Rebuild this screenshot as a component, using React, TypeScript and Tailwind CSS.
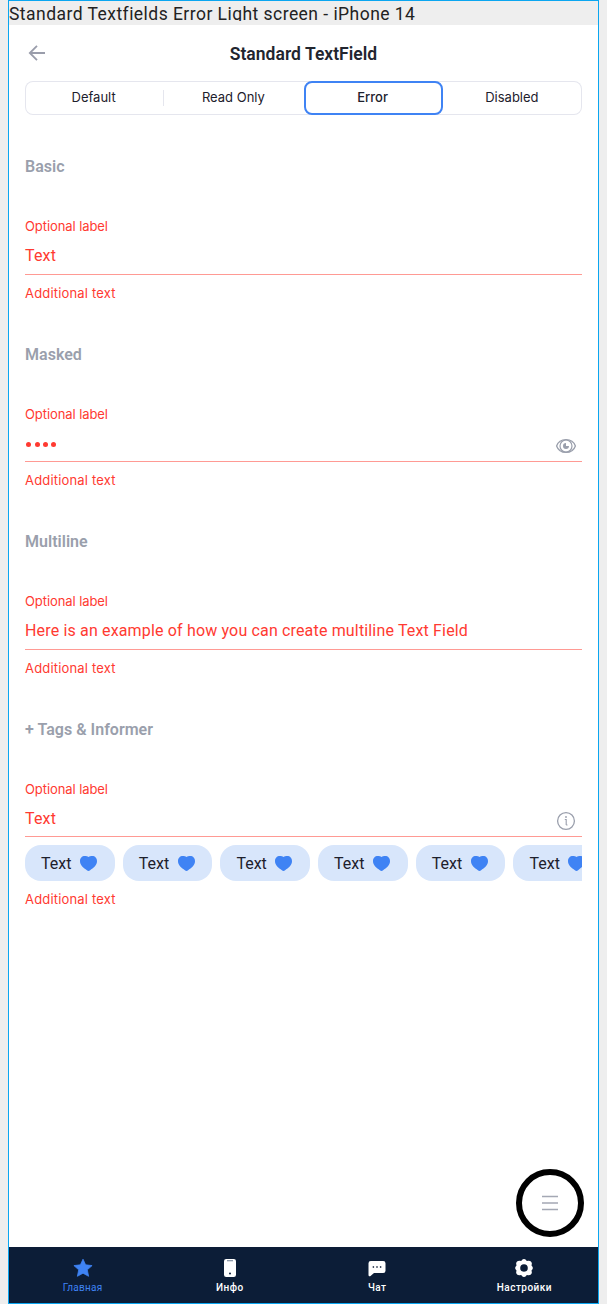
import React from "react";

const TABS = ["Default", "Read Only", "Error", "Disabled"];

function ArrowLeft() {
  return (
    <svg className="h-6 w-6" viewBox="0 0 24 24" fill="none" stroke="#9a9dab" strokeWidth="1.8">
      <path d="M20 12H5M12 4.8 4.8 12l7.2 7.2" />
    </svg>
  );
}

function EyeIcon() {
  return (
    <svg className="h-6 w-6" viewBox="0 0 24 24" fill="none" stroke="#9a9fac">
      <path d="M2.600 12C4 8 7.800 5.600 12 5.600S20 8 21.400 12C20 16 16.200 18.400 12 18.400S4 16 2.600 12Z" strokeWidth="1.300" />
      <circle cx="12" cy="12" r="6" strokeWidth="1.200" />
      <path d="M12 9a3 3 0 1 0 3 3h-3Z" fill="#9a9fac" stroke="none" />
    </svg>
  );
}

function InfoIcon() {
  return (
    <svg className="h-6 w-6" viewBox="0 0 24 24" fill="none" stroke="#9a9fac" strokeWidth="1.3">
      <circle cx="12" cy="12" r="8.400" />
      <path d="M10.800 10.500H12.200V16M12.200 16h1.300" strokeWidth="1.100" />
      <circle cx="12" cy="8" r=".9" fill="#9a9fac" stroke="none" />
    </svg>
  );
}

function Heart() {
  return (
    <svg className="h-[15px] w-[17px] shrink-0" viewBox="0 0 18 15" preserveAspectRatio="none" fill="#3f83f4">
      <path d="M9 .9C10.100.2 11.300 0 12.800 0c3.200 0 5.200 2 5.200 5.200 0 4-3.900 6.700-7.300 9-1.100.9-2.300.9-3.400 0C3.900 11.900 0 9.200 0 5.200 0 2 2 0 5.200 0 6.800 0 7.900.2 9 .9Z" />
    </svg>
  );
}

function Field({
  title,
  className,
  labelClass,
  valueClass,
  children,
  icon,
  tags,
}: {
  title: string;
  className: string;
  labelClass: string;
  valueClass?: string;
  children: React.ReactNode;
  icon?: React.ReactNode;
  tags?: boolean;
}) {
  return (
    <section className={className}>
      <h2 className="h-[54px] text-[16px] leading-[54px] font-semibold tracking-[0.02px] text-[#9a9fac]">{title}</h2>
      <div className={"h-5 font-['Inter',sans-serif] text-[13px] leading-5 tracking-[-0.08px] " + labelClass}>
        Optional label
      </div>
      <div className="flex h-[32px] justify-between border-b border-[#ff9a94] text-[16px] leading-[26px] tracking-[0.16px]">
        <div className={valueClass}>{children}</div>
        {icon && <div className="mt-1 mr-1">{icon}</div>}
      </div>
      {tags && (
        <div className="mt-2 flex h-9 gap-2 overflow-hidden">
          {[0, 1, 2, 3, 4, 5].map((i) => (
            <div key={i} className="flex w-[89.7px] shrink-0 items-center gap-[9px] rounded-[16px] bg-[#d8e6fb] pl-4 text-[16px] text-[#1d202c]">
              <span className="w-[30px] pt-px">Text</span>
              <Heart />
            </div>
          ))}
        </div>
      )}
      <div className="mt-2 h-5 font-['Inter',sans-serif] text-[13px] leading-5 tracking-[0.17px]">Additional text</div>
    </section>
  );
}

function Star() {
  return (
    <svg className="h-5 w-5" viewBox="0 0 20 20" fill="#3f83f4" stroke="#3f83f4" strokeWidth=".8" strokeLinejoin="round">
      <path d="m10 1.200 2.600 5.600 6.500.8-4.800 4.200 1.300 6.500L10 15.200l-5.600 3.100 1.300-6.500L.9 7.600l6.500-.8Z" />
    </svg>
  );
}

function Phone() {
  return (
    <svg className="h-5 w-5" viewBox="0 0 20 20">
      <rect x="4" y="1" width="12" height="18" rx="2.200" fill="#fff" />
      <path d="M7 2.700h6" stroke="#8490a2" strokeWidth="1.200" />
      <circle cx="10" cy="15.500" r="1" fill="#0c1d37" />
    </svg>
  );
}

function Chat() {
  return (
    <svg className="h-5 w-5" viewBox="0 0 20 20">
      <path d="M3.800 3h12.400a2.300 2.300 0 0 1 2.300 2.300v7.400a2.300 2.300 0 0 1-2.300 2.300H7l-3.500 3c-.8.6-2 .2-2-1V5.300A2.300 2.300 0 0 1 3.800 3Z" fill="#fff" />
      <path d="M5.700 9h1.400M9.300 9h1.400M12.900 9h1.400" stroke="#0c1d37" strokeWidth="1.300" />
    </svg>
  );
}

function Gear() {
  return (
    <svg className="h-5 w-5" viewBox="0 0 20 20" fill="#fff">
      <path
        fillRule="evenodd"
        d="M8.200 1.800c.8-1 2.800-1 3.600 0l1 1.100 1.600-.2c2-.2 3.800 1.400 3.400 3.300l-.3 1.500.8 1c.7.900.7 2.100 0 3l-.8 1 .3 1.500c.4 1.900-1.400 3.500-3.400 3.300l-1.600-.2-1 1.100c-.8 1-2.800 1-3.600 0l-1-1.100-1.600.2c-2 .2-3.800-1.400-3.400-3.300l.3-1.500-.8-1c-.7-.9-.7-2.100 0-3l.8-1L2.200 6c-.4-1.900 1.400-3.500 3.400-3.300l1.600.2ZM10 6.200a3.800 3.800 0 1 0 0 7.600 3.800 3.800 0 0 0 0-7.600Z"
      />
    </svg>
  );
}

const NAV = [
  { label: "Главная", icon: <Star />, cls: "text-[#3f83f4] font-normal tracking-[0.28px]" },
  { label: "Инфо", icon: <Phone />, cls: "text-white font-medium tracking-[0.5px]" },
  { label: "Чат", icon: <Chat />, cls: "text-white font-medium tracking-[0.3px]" },
  { label: "Настройки", icon: <Gear />, cls: "text-white font-medium tracking-[0.48px]" },
];

export default function App() {
  return (
    <div className="h-[1304px] w-[607px] bg-[#eeeeee] pl-2 font-['Roboto',sans-serif]">
      <div className="relative flex h-[1304px] w-[591px] flex-col border border-[#0ba6f0] bg-white">
        <div className="h-6 shrink-0 bg-[#eeeeee]">
          <div className="h-[20px] overflow-hidden text-[17.5px] leading-[26px] tracking-[0.46px] whitespace-nowrap text-[#222222]">
            Standard Textfields Error Light screen - iPhone 14
          </div>
        </div>
        <header className="grid h-14 shrink-0 grid-cols-[40px_1fr_40px] items-center px-4">
          <ArrowLeft />
          <h1 className="pt-0.5 text-center text-[17.5px] font-semibold tracking-[0.03px] text-[#22252f]">Standard TextField</h1>
        </header>
        <div className="mx-4 flex h-[34px] shrink-0 rounded-[8px] shadow-[inset_0_0_0_1px_#e5e6ee]">
          {TABS.map((t, i) => (
            <div
              key={t}
              className={
                "flex w-1/4 items-center justify-center font-['Inter',sans-serif] text-[13px] leading-5 text-[#1d202c] " +
                (i === 2 ? "rounded-[8px] border-2 border-[#3f83f4] bg-white font-medium" : "")
              }
            >
              <span className="flex-1 pr-px pb-0.5 text-center">{t}</span>
              {i === 0 && <i className="h-4 w-px bg-[#e5e6ee]" />}
            </div>
          ))}
        </div>
        <main className="mx-4 flex flex-1 flex-col pt-[25px] text-[#ff3a31]">
          <Field title="Basic" className="h-[188px]" labelClass="mt-[22px] mb-[7px]">Text</Field>
          <Field title="Masked" className="h-[187px]" labelClass="mt-[22px] mb-[6px]" icon={<EyeIcon />}>
            <div className="flex h-[29px] items-center gap-[3.100px] pl-[1.300px]">
              {[0, 1, 2, 3].map((i) => (
                <i key={i} className="h-[5.500px] w-[5.200px] rounded-full bg-[#ff3a31]" />
              ))}
            </div>
          </Field>
          <Field title="Multiline" className="h-[188px]" labelClass="mt-[22px] mb-[7px]">
            Here is an example of how you can create multiline Text Field
          </Field>
          <Field
            title="+ Tags &amp; Informer"
            className="h-[220px]"
            labelClass="mt-[22px] mb-[6px]"
            valueClass="pt-px"
            icon={<InfoIcon />}
            tags
          >
            Text
          </Field>
        </main>
        <button className="absolute right-[14px] bottom-[66px] flex h-[68px] w-[68px] items-center justify-center rounded-full border-[6px] border-black bg-white" aria-label="Menu">
          <svg className="h-4 w-4" viewBox="0 0 16 16" stroke="#a4a8b4" strokeWidth="1.500">
            <path d="M0 1.500h16M0 8h16M0 14.500h16" />
          </svg>
        </button>
        <nav className="grid h-14 shrink-0 grid-cols-4 bg-[#0c1d37]">
          {NAV.map((n) => (
            <div key={n.label} className={"flex flex-col items-center pt-[11px] text-[10px] leading-5 " + n.cls}>
              {n.icon}
              <span>{n.label}</span>
            </div>
          ))}
        </nav>
      </div>
    </div>
  );
}
